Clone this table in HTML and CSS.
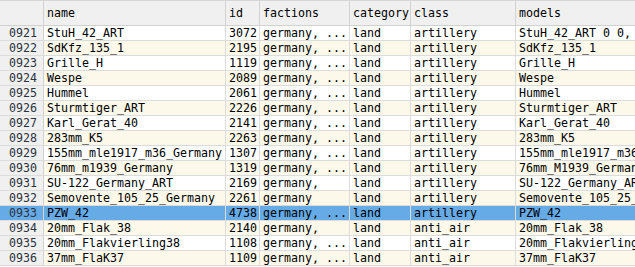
FILE: index.html
```html
<!DOCTYPE html>
<html>
<head>
<meta charset="utf-8">
<link rel="stylesheet" href="styles.css">
</head>
<body>
<div class="table">
  <div class="row head">
    <div class="num"></div><div class="c">name</div><div class="c">id</div><div class="c">factions</div><div class="c">category</div><div class="c">class</div><div class="c">models</div>
  </div>
  <div class="row"><div class="num">0921</div><div class="c">StuH_42_ART</div><div class="c">3072</div><div class="c">germany, ...</div><div class="c">land</div><div class="c">artillery</div><div class="c">StuH_42_ART 0 0, 0</div></div>
  <div class="row alt"><div class="num">0922</div><div class="c">SdKfz_135_1</div><div class="c">2195</div><div class="c">germany, ...</div><div class="c">land</div><div class="c">artillery</div><div class="c">SdKfz_135_1</div></div>
  <div class="row"><div class="num">0923</div><div class="c">Grille_H</div><div class="c">1119</div><div class="c">germany, ...</div><div class="c">land</div><div class="c">artillery</div><div class="c">Grille_H</div></div>
  <div class="row alt"><div class="num">0924</div><div class="c">Wespe</div><div class="c">2089</div><div class="c">germany, ...</div><div class="c">land</div><div class="c">artillery</div><div class="c">Wespe</div></div>
  <div class="row"><div class="num">0925</div><div class="c">Hummel</div><div class="c">2061</div><div class="c">germany, ...</div><div class="c">land</div><div class="c">artillery</div><div class="c">Hummel</div></div>
  <div class="row alt"><div class="num">0926</div><div class="c">Sturmtiger_ART</div><div class="c">2226</div><div class="c">germany, ...</div><div class="c">land</div><div class="c">artillery</div><div class="c">Sturmtiger_ART</div></div>
  <div class="row"><div class="num">0927</div><div class="c">Karl_Gerat_40</div><div class="c">2141</div><div class="c">germany, ...</div><div class="c">land</div><div class="c">artillery</div><div class="c">Karl_Gerat_40</div></div>
  <div class="row alt"><div class="num">0928</div><div class="c">283mm_K5</div><div class="c">2263</div><div class="c">germany, ...</div><div class="c">land</div><div class="c">artillery</div><div class="c">283mm_K5</div></div>
  <div class="row"><div class="num">0929</div><div class="c">155mm_mle1917_m36_Germany</div><div class="c">1307</div><div class="c">germany, ...</div><div class="c">land</div><div class="c">artillery</div><div class="c">155mm_mle1917_m36_Germany</div></div>
  <div class="row alt"><div class="num">0930</div><div class="c">76mm_m1939_Germany</div><div class="c">1319</div><div class="c">germany, ...</div><div class="c">land</div><div class="c">artillery</div><div class="c">76mm_M1939_Germany</div></div>
  <div class="row"><div class="num">0931</div><div class="c">SU-122_Germany_ART</div><div class="c">2169</div><div class="c">germany,</div><div class="c">land</div><div class="c">artillery</div><div class="c">SU-122_Germany_ART</div></div>
  <div class="row alt"><div class="num">0932</div><div class="c">Semovente_105_25_Germany</div><div class="c">2261</div><div class="c">germany</div><div class="c">land</div><div class="c">artillery</div><div class="c">Semovente_105_25_Germany</div></div>
  <div class="row sel"><div class="num">0933</div><div class="c">PZW_42</div><div class="c">4738</div><div class="c">germany, ...</div><div class="c">land</div><div class="c">artillery</div><div class="c">PZW_42</div></div>
  <div class="row alt"><div class="num">0934</div><div class="c">20mm_Flak_38</div><div class="c">2140</div><div class="c">germany,</div><div class="c">land</div><div class="c">anti_air</div><div class="c">20mm_Flak_38</div></div>
  <div class="row"><div class="num">0935</div><div class="c">20mm_Flakvierling38</div><div class="c">1108</div><div class="c">germany, ...</div><div class="c">land</div><div class="c">anti_air</div><div class="c">20mm_Flakvierling38</div></div>
  <div class="row alt"><div class="num">0936</div><div class="c">37mm_FlaK37</div><div class="c">1109</div><div class="c">germany, ...</div><div class="c">land</div><div class="c">anti_air</div><div class="c">37mm_FlaK37</div></div>
</div>
</body>
</html>
```
FILE: styles.css
```css
html, body {
  margin: 0;
  padding: 0;
  background: #ffffff;
  overflow: hidden;
}
.table {
  width: 760px;
  font-family: "DejaVu Sans Mono", "Liberation Mono", monospace;
  font-size: 11.63px;
  color: #000;
  border-top: 1px solid #d6d6d6;
}
.row {
  display: grid;
  grid-template-columns: 44px 182px 34px 90px 61px 105px 244px;
  height: 15px;
  border-bottom: 1px solid #dcdcdc;
  background: #ffffff;
  box-sizing: border-box;
}
.row.alt { background: #fdf9ea; }
.row.sel { background: #66aae6; }
.row.head {
  height: 25px;
  background: #f0f0f0;
  border-bottom: 1px solid #d2d2d2;
}
.c, .num {
  white-space: nowrap;
  overflow: hidden;
  border-right: 1px solid #dcdcdc;
  padding-left: 3px;
  line-height: 14px;
}
.head .c, .head .num {
  line-height: 24px;
  border-right-color: #d2d2d2;
}
.num {
  background: #f0f0f0;
  color: #2c3340;
  text-align: right;
  padding-left: 0;
  padding-right: 6px;
  border-right-color: #d2d2d2;
}
.sel .num { background: #66aae6; }
```
